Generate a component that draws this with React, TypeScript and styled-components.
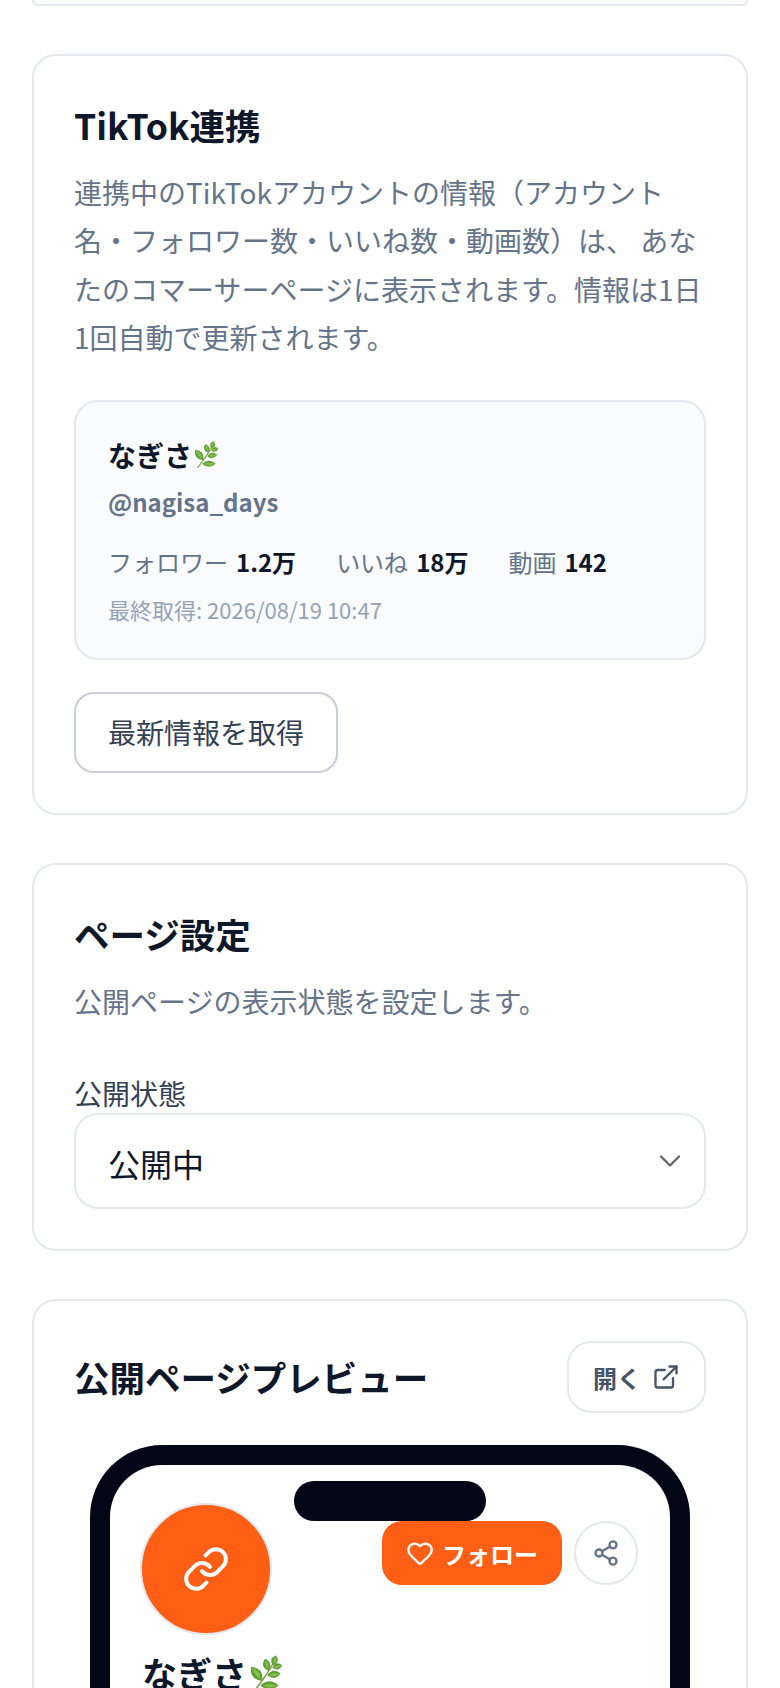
import React from 'react';
import styled, { createGlobalStyle } from 'styled-components';
import { ChevronDown, ExternalLink, Heart, Link, Share2 } from 'lucide-react';

const GlobalStyle = createGlobalStyle`
  * { box-sizing: border-box; }
  html, body { margin: 0; padding: 0; background: #fff; }
  body {
    height: 1688px;
    overflow: hidden;
    font-family: "Noto Sans CJK JP", "Noto Sans", sans-serif;
    color: #0f172a;
  }
`;

const Page = styled.main`
  display: flex;
  flex-direction: column;
  gap: 48px;
  padding: 0 32px;
`;

const CutOffCard = styled.div`
  height: 6px;
  border: 2px solid #e4e8ee;
  border-top: 0;
  border-radius: 0 0 20px 20px;
`;

const Card = styled.section`
  border: 2px solid #e4e8ee;
  border-radius: 24px;
  padding: 40px;
  background: #fff;
`;

const Title = styled.h2`
  margin: 0;
  font-size: 35.5px;
  line-height: 58px;
  font-weight: 700;
  color: #0f172a;
`;

const Description = styled.p`
  margin: 14px 0 0;
  font-size: 28px;
  line-height: 48.4px;
  color: #64748b;
`;

const AccountBox = styled.div`
  margin-top: 38px;
  padding: 32px 32px 29px;
  border: 2px solid #e4e8ee;
  border-radius: 24px;
  background: #f9fbfd;
`;

const AccountName = styled.div`
  display: flex;
  align-items: center;
  font-size: 28px;
  line-height: 42px;
  font-weight: 700;
`;

const Handle = styled.div`
  margin-top: 4px;
  font-size: 24px;
  line-height: 44px;
  font-weight: 700;
  color: #64748b;
`;

const Stats = styled.div`
  display: flex;
  gap: 40px;
  margin-top: 14px;
`;

const Stat = styled.span`
  display: flex;
  gap: 8px;
  align-items: baseline;
  font-size: 24px;
  line-height: 48px;
  color: #64748b;

  b {
    font-weight: 700;
    color: #0f172a;
  }
`;

const Fetched = styled.div`
  margin-top: 3px;
  font-size: 22px;
  line-height: 40px;
  color: #94a3b8;
`;

const OutlineButton = styled.button`
  display: block;
  margin-top: 32px;
  padding: 14px 32px;
  border: 2px solid #c9ccdb;
  border-radius: 20px;
  background: #fff;
  font: inherit;
  font-size: 28px;
  line-height: 49px;
  color: #334155;
`;

const Label = styled.label`
  display: block;
  margin-top: 48px;
  font-size: 28px;
  line-height: 40px;
  color: #334155;
`;

const SelectWrap = styled.div`
  position: relative;
`;

const Select = styled.select`
  display: block;
  width: 100%;
  height: 96px;
  padding: 3px 32px 0;
  border: 2px solid #e4e8ee;
  border-radius: 24px;
  background: #fff;
  appearance: none;
  font: inherit;
  font-size: 32px;
  color: #0f172a;
`;

const SelectChevron = styled(ChevronDown)`
  position: absolute;
  top: 30px;
  right: 18px;
  width: 36px;
  height: 36px;
  color: #666;
  pointer-events: none;
`;

const PreviewHeader = styled.div`
  display: flex;
  align-items: center;
  justify-content: space-between;
`;

const OpenButton = styled.a`
  display: flex;
  align-items: center;
  gap: 11px;
  height: 72px;
  padding: 0 24px;
  border: 2px solid #e4e8ee;
  border-radius: 24px;
  font-size: 24px;
  font-weight: 700;
  color: #475569;

  svg {
    width: 28px;
    height: 28px;
  }
`;

const PhoneFrame = styled.div`
  position: relative;
  width: 600px;
  margin: 32px auto 0;
  border: 20px solid #020617;
  border-bottom: 0;
  border-radius: 72px 72px 0 0;
  background: #fff;
`;

const Notch = styled.div`
  position: absolute;
  top: 16px;
  left: 50%;
  width: 192px;
  height: 40px;
  margin-left: -96px;
  border-radius: 20px;
  background: #020617;
`;

const PhoneScreen = styled.div`
  padding: 38px 32px 40px 30px;
`;

const ProfileTop = styled.div`
  display: flex;
  align-items: flex-start;
  justify-content: space-between;
`;

const Avatar = styled.div`
  display: flex;
  align-items: center;
  justify-content: center;
  flex: none;
  width: 132px;
  height: 132px;
  border: 2px solid #e4e8ee;
  border-radius: 50%;
  background: #ff5f15;
  color: #fff;

  svg {
    width: 48px;
    height: 48px;
  }
`;

const ProfileActions = styled.div`
  display: flex;
  gap: 12px;
  margin-top: 18px;
`;

const FollowButton = styled.button`
  display: flex;
  align-items: center;
  gap: 8px;
  width: 180px;
  height: 64px;
  padding: 0 24px;
  border: 0;
  border-radius: 20px;
  background: #ff5f15;
  font: inherit;
  font-size: 24px;
  font-weight: 700;
  white-space: nowrap;
  color: #fff;

  svg {
    width: 28px;
    height: 28px;
    flex: none;
  }
`;

const ShareButton = styled.button`
  display: flex;
  align-items: center;
  justify-content: center;
  width: 64px;
  height: 64px;
  padding: 0;
  border: 2px solid #e4e8ee;
  border-radius: 50%;
  background: #fff;
  color: #64748b;

  svg {
    width: 28px;
    height: 28px;
  }
`;

const ProfileName = styled.h3`
  display: flex;
  align-items: center;
  margin: 11px 0 0 2px;
  font-size: 35px;
  line-height: 54px;
  font-weight: 700;
`;

// base x, base y, angle, length, half width of each leaf of the herb emoji
const herbLeaves: [number, number, number, number, number][] = [
  [23, 9, 18, 9, 3],
  [22.5, 11, 78, 9, 2.8],
  [19, 14, -16, 11, 3.2],
  [18, 18, 82, 12, 3.2],
  [13.5, 23, -38, 16, 4.2],
  [12, 27, 90, 16, 3.6],
];

const Herb = ({ size }: { size: number }) => (
  <svg width={size} height={size} viewBox="0 0 32 32" aria-hidden="true">
    <path d="M6.5 32C12 25 19 16 24 6" fill="none" stroke="#7a9a4c" strokeWidth="1.3" strokeLinecap="round" />
    {herbLeaves.map(([x, y, angle, length, half]) => (
      <g key={`${x}-${y}`} transform={`translate(${x} ${y}) rotate(${angle})`}>
        <path d={`M0 0Q${half * 2} ${-length / 2} 0 ${-length}Q${-half * 2} ${-length / 2} 0 0`} fill="#5fa032" />
        <path d={`M0 ${-length * 0.15}Q${half} ${-length / 2} 0 ${-length * 0.9}Q${-half * 0.6} ${-length / 2} 0 ${-length * 0.15}`} fill="#86bf4d" />
      </g>
    ))}
  </svg>
);

export default function App() {
  return (
    <Page>
      <GlobalStyle />
      <CutOffCard />

      <Card>
        <Title>TikTok連携</Title>
        <Description>
          連携中のTikTokアカウントの情報（アカウント名・フォロワー数・いいね数・動画数）は、 あなたのコマーサーページに表示されます。情報は1日1回自動で更新されます。
        </Description>
        <AccountBox>
          <AccountName>なぎさ<Herb size={27} /></AccountName>
          <Handle>@nagisa_days</Handle>
          <Stats>
            <Stat>フォロワー <b>1.2万</b></Stat>
            <Stat>いいね <b>18万</b></Stat>
            <Stat>動画 <b>142</b></Stat>
          </Stats>
          <Fetched>最終取得: 2026/08/19 10:47</Fetched>
        </AccountBox>
        <OutlineButton type="button">最新情報を取得</OutlineButton>
      </Card>

      <Card>
        <Title>ページ設定</Title>
        <Description>公開ページの表示状態を設定します。</Description>
        <Label htmlFor="visibility">公開状態</Label>
        <SelectWrap>
          <Select id="visibility" defaultValue="public">
            <option value="public">公開中</option>
            <option value="private">非公開</option>
          </Select>
          <SelectChevron strokeWidth={1.6} />
        </SelectWrap>
      </Card>

      <Card>
        <PreviewHeader>
          <Title>公開ページプレビュー</Title>
          <OpenButton>開く <ExternalLink strokeWidth={2} /></OpenButton>
        </PreviewHeader>
        <PhoneFrame>
          <Notch />
          <PhoneScreen>
            <ProfileTop>
              <Avatar><Link strokeWidth={2} /></Avatar>
              <ProfileActions>
                <FollowButton type="button"><Heart strokeWidth={2} />フォロー</FollowButton>
                <ShareButton type="button" aria-label="share"><Share2 strokeWidth={2} /></ShareButton>
              </ProfileActions>
            </ProfileTop>
            <ProfileName>なぎさ<Herb size={36} /></ProfileName>
          </PhoneScreen>
        </PhoneFrame>
      </Card>
    </Page>
  );
}
